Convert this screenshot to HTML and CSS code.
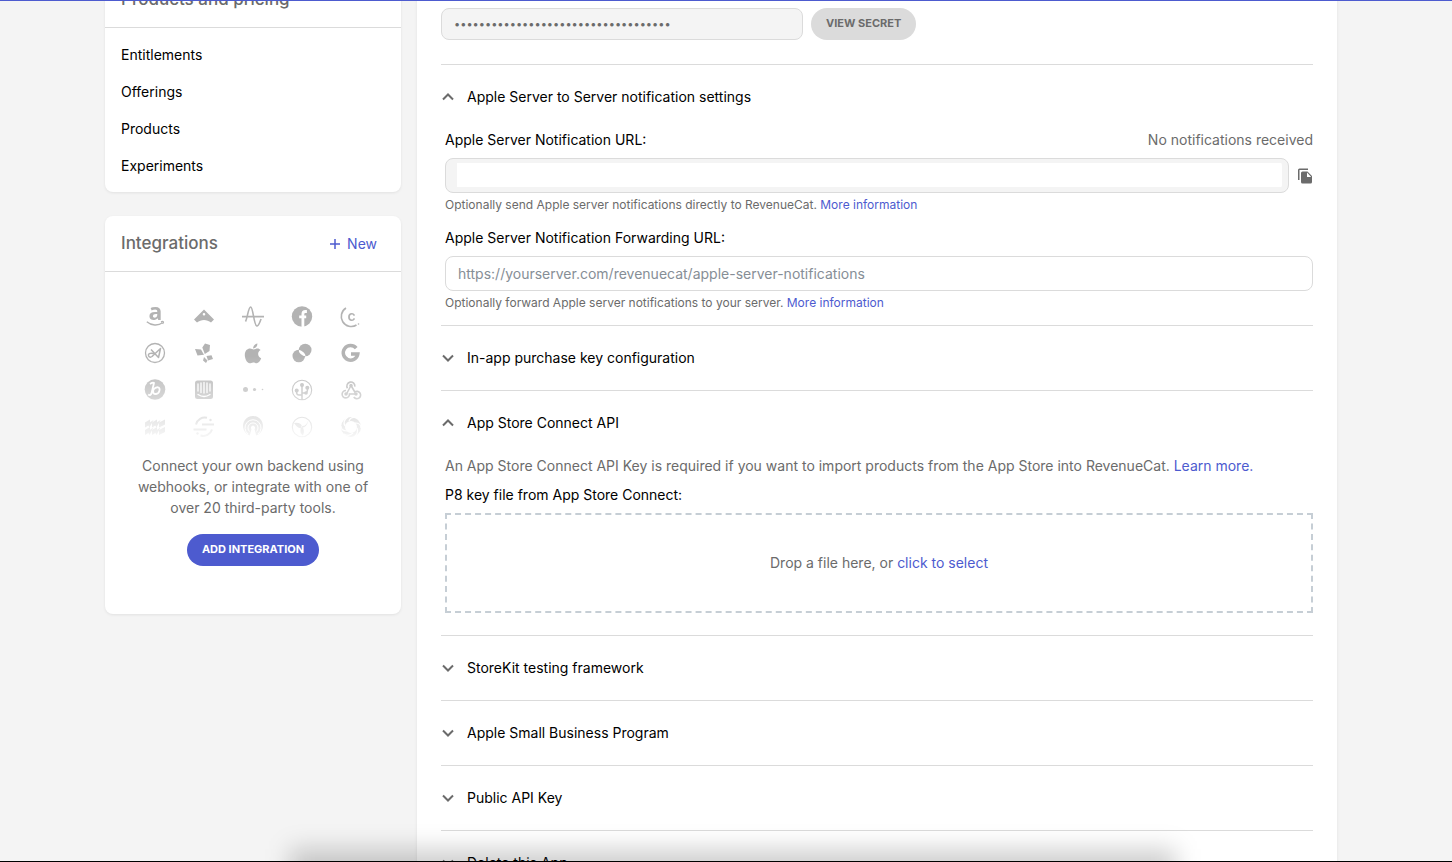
FILE: index.html
```html
<!DOCTYPE html>
<html lang="en">
<head>
<meta charset="utf-8">
<title>App settings</title>
<link rel="stylesheet" href="styles.css">
</head>
<body>
<div class="page">
  <aside class="sidebar">
    <nav class="card">
      <div class="card-header"><h2 class="card-title">Products and pricing</h2></div>
      <ul class="nav-list">
        <li><a class="nav-link" href="#">Entitlements</a></li>
        <li><a class="nav-link" href="#">Offerings</a></li>
        <li><a class="nav-link" href="#">Products</a></li>
        <li><a class="nav-link" href="#">Experiments</a></li>
      </ul>
    </nav>

    <section class="card">
      <div class="card-header">
        <h2 class="card-title">Integrations</h2>
        <button class="new-button" type="button">
          <svg width="10" height="10" viewBox="0 0 10 10"><path d="M5 0v10M0 5h10" stroke="currentColor" stroke-width="1.5"/></svg>
          New
        </button>
      </div>
      <div class="integrations">
        <div class="logo-grid" aria-hidden="true">
          <svg class="logo" viewBox="0 0 24 24"><text class="logo-a" x="12.500" y="16" text-anchor="middle">a</text><path class="line" stroke-width="1.300" d="M3.800 17.800c4.500 4 11.500 4.200 15.700 1M18 17.900c1-.5 2-.5 2.300-.2s-.1 1.500-.7 2.200"/></svg>
          <svg class="logo" viewBox="0 0 24 24"><path fill-rule="evenodd" d="M12 5.500 22 15.500 19 18.500C15 15 9 15 5 18.500L2 15.500ZM12 9a1.300 1.300 0 1 0 0 2.600A1.300 1.300 0 0 0 12 9Z"/></svg>
          <svg class="logo" viewBox="0 0 24 24"><path class="line" stroke-width="1.600" d="M1 12.600h22M4.500 17.500C6.500 14 7.300 3 9.700 3s3.200 19 6.200 19c2 0 2.800-4 4.200-7"/></svg>
          <svg class="logo" viewBox="0 0 24 24"><circle cx="12" cy="12.500" r="10.200"/><path stroke="#fff" stroke-width="2.800" fill="none" d="M12.900 23v-13q0-2.500 2.500-2.500h1.500M9.200 12.900h7"/></svg>
          <svg class="logo" viewBox="0 0 24 24"><path class="line" stroke-width="1.600" d="M7 4A9.700 9.700 0 1 0 17.500 21"/><text class="logo-c" x="12.500" y="16.500" text-anchor="middle">c</text><circle cx="19.500" cy="20" r=".8"/></svg>

          <svg class="logo" viewBox="0 0 24 24"><circle class="line" cx="12" cy="12" r="9.500" stroke-width="1.300"/><path class="line" stroke-width="1.500" stroke-linejoin="round" d="M8 8.500 15.500 16.500 17.500 7.500 9 15.500C7 17 5 15.500 5.500 13.500 6 12 8 12 12 12.800"/></svg>
          <svg class="logo" viewBox="0 0 24 24"><path d="M13 2.500 18 4l-.5 6-4.700 3-2.500-6.500ZM3 8l6 .5 3 5.300-6.500.7ZM14.500 15l5-.7L21 18l-5 1.500ZM12 16l3.500 3.500L14 22l-3-2.500Z"/></svg>
          <svg class="logo" viewBox="0 0 24 24"><path d="M16.400 2.500c.1 3-2 5-4.300 4.900C12 5 14 2.800 16.400 2.500ZM19.600 9c-3.700 2.200-3 6.800.6 8.200-1 2.700-2.600 5-4.600 5-1.300 0-1.800-.8-3.400-.8s-2.200.8-3.500.8C5.700 22.200 3.800 17 3.800 14c0-4.500 2.700-6.600 5.200-6.600 1.500 0 2.700 1 3.600 1s2.300-1 4-1c1 0 2.300.5 3 1.600Z"/></svg>
          <svg class="logo" viewBox="0 0 24 24"><circle cx="15.200" cy="9" r="6.300"/><circle cx="8.800" cy="15" r="6.300"/><path fill="#fff" d="M9 9c2-.4 7.200 4 6.300 6-2 .6-7.500-3.500-6.300-6Z"/></svg>
          <svg class="logo" viewBox="0 0 24 24"><path class="line" stroke-width="3.500" d="M17.200 7.200A7.300 7.300 0 1 0 18.800 12.900H12"/></svg>

          <svg class="logo" viewBox="0 0 24 24"><circle cx="12" cy="11.500" r="10.300"/><path fill="none" stroke="#fff" stroke-width="1.800" d="M7 6q3-2 4-1L8.700 14.500q-1 3.800-3.500 2M10.500 11.500q2-2.500 4.500-2.200c3 .5 1.500 6.500-2 6.700-2.500.2-3.500-1.500-2.500-4.500"/></svg>
          <svg class="logo" viewBox="0 0 24 24"><rect x="3" y="2.500" width="18" height="18.500" rx="2.500"/><path fill="none" stroke="#fff" stroke-width="1.300" stroke-linecap="round" d="M6 6v7M9 5v9.500M12 4.500v10.500M15 5v9.500M18 6v7M6 16.500q6 4 12 0"/></svg>
          <svg class="logo" viewBox="0 0 24 24"><circle cx="4.500" cy="11.500" r="2.500"/><circle cx="13.500" cy="11.500" r="1.600"/><circle cx="21.500" cy="11.500" r=".8"/></svg>
          <svg class="logo" viewBox="0 0 24 24"><circle class="line" cx="12" cy="12" r="9.700" stroke-width="1.100"/><path class="line" stroke-width="1.500" d="M12 22V7M12 17H9q-2.500 0-2.500-3.500M12 15h3q2.500 0 2.500-4"/><circle cx="12" cy="7" r="2"/><circle cx="6.700" cy="12.500" r="2"/><circle cx="17.300" cy="9.700" r="2"/><circle cx="16" cy="15" r="1.800"/></svg>
          <svg class="logo" viewBox="0 0 24 24"><path class="line" stroke-width="1.600" d="M8.500 10.200a4 4 0 1 1 7.300-1.500M12 7.500 15.800 14a3.700 3.700 0 1 1-1 5M12 7.500 7.500 16M7 12.500A3.700 3.700 0 1 0 10.500 16h6.500"/><circle cx="12" cy="7.500" r="1.700"/><circle cx="7" cy="16" r="1.700"/><circle cx="17" cy="16" r="1.700"/></svg>

          <svg class="logo" viewBox="0 0 24 24"><path d="m2 7.500 5-3v5l-5 3Zm7 0 5-3v5l-5 3Zm7 0 6-3v5l-6 3ZM2 15l5-3v5l-5 3Zm7 0 5-3v5l-5 3Zm7 0 6-3v5l-6 3Z"/><path d="m4.500 9 6-4-4 7.500Zm7 0 6-4-4 7.500Zm-7 7.500 6-4-4 7.500Zm7 0 6-4-4 7.500Z"/></svg>
          <svg class="logo" viewBox="0 0 24 24"><path class="line" stroke-width="2" d="M10 9.500h12M1.500 14.500h13M4 9.500A9 9 0 0 1 15 2.800M20 14.500A9 9 0 0 1 8.500 20.500"/><circle cx="18.500" cy="5" r="1.200"/><circle cx="5.500" cy="18.500" r="1.200"/></svg>
          <svg class="logo" viewBox="0 0 24 24"><path d="M8.800 20.500a10 10 0 1 1 6.400 0L13.500 14a2 2 0 1 0-3 0Z"/><path fill="none" stroke="#fff" d="M8.500 16.500a5 5 0 1 1 7 0M7 19a8 8 0 1 1 10 0"/></svg>
          <svg class="logo" viewBox="0 0 24 24"><circle class="line" cx="12" cy="12" r="9.700" stroke-width="1.100"/><path d="M4 8q6-1 8 3 1 2-.5 2.300Q8 14 4 8ZM18.500 5q-2 6-6 6-2 0-1.500 1.700Q17 13 18.500 5ZM13 20.500q-4-3-2-7.500.8-1.500 1.700-.5 2.300 3 .3 8Z"/></svg>
          <svg class="logo" viewBox="0 0 24 24"><circle class="line" cx="12" cy="12" r="8" stroke-width="4"/><path fill="none" stroke="#fff" stroke-width="1.200" d="M10 6Q12 1 18 3M16 8q6 0 6 5M18 13q2 5-3 9M14 18q-4 4-9 1M8 16q-6 0-6-5M6 11Q3 6 9 2"/></svg>
        </div>
        <p class="integrations-text">Connect your own backend using webhooks, or integrate with one of over 20 third-party tools.</p>
        <button class="pill pill-primary" type="button">ADD INTEGRATION</button>
      </div>
    </section>
  </aside>

  <main class="main">
    <div class="secret-row">
      <input class="input secret-input" type="password" aria-label="Shared secret" value="abcdefghijklmnopqrstuvwxyz123456789" readonly>
      <button class="pill pill-muted" type="button">VIEW SECRET</button>
    </div>

    <section class="panel">
      <button class="panel-header" type="button" aria-expanded="true">
        <svg class="chevron chevron-up" viewBox="0 0 14 14"><path d="m2 4.500 5 5 5-5"/></svg>
        <span>Apple Server to Server notification settings</span>
      </button>
      <div class="panel-body">
        <div class="label-row">
          <label for="server-url">Apple Server Notification URL:</label>
          <span class="muted">No notifications received</span>
        </div>
        <div class="url-row">
          <input class="input url-input" id="server-url" type="text" readonly>
          <button class="copy-button" type="button" aria-label="Copy URL">
            <svg width="16" height="16" viewBox="0 0 16 16"><path d="M1 12V2q0-1.500 1.500-1.500H11V2H2.500v10Z"/><path fill-rule="evenodd" d="M5.500 3.500h5L15 8v6q0 1.500-1.500 1.500h-8Q4 15.500 4 14V5q0-1.500 1.500-1.500ZM10 4.500V9h4.200Z"/></svg>
          </button>
        </div>
        <p class="help">Optionally send Apple server notifications directly to RevenueCat. <a href="#">More information</a></p>
        <div class="label-row label-row-next"><label for="forward-url">Apple Server Notification Forwarding URL:</label></div>
        <input class="input forward-input" id="forward-url" type="url" placeholder="https://yourserver.com/revenuecat/apple-server-notifications">
        <p class="help">Optionally forward Apple server notifications to your server. <a href="#">More information</a></p>
      </div>
    </section>

    <section class="panel">
      <button class="panel-header" type="button" aria-expanded="false">
        <svg class="chevron" viewBox="0 0 14 14"><path d="m2 4.500 5 5 5-5"/></svg>
        <span>In-app purchase key configuration</span>
      </button>
    </section>

    <section class="panel">
      <button class="panel-header" type="button" aria-expanded="true">
        <svg class="chevron chevron-up" viewBox="0 0 14 14"><path d="m2 4.500 5 5 5-5"/></svg>
        <span>App Store Connect API</span>
      </button>
      <div class="panel-body panel-body-upload">
        <p class="muted intro">An App Store Connect API Key is required if you want to import products from the App Store into RevenueCat. <a href="#">Learn more.</a></p>
        <div class="label-row"><span id="p8-label">P8 key file from App Store Connect:</span></div>
        <div class="dropzone muted" role="group" aria-labelledby="p8-label"><span>Drop a file here, or <a href="#">click to select</a></span></div>
      </div>
    </section>

    <section class="panel">
      <button class="panel-header" type="button" aria-expanded="false">
        <svg class="chevron" viewBox="0 0 14 14"><path d="m2 4.500 5 5 5-5"/></svg>
        <span>StoreKit testing framework</span>
      </button>
    </section>
    <section class="panel">
      <button class="panel-header" type="button" aria-expanded="false">
        <svg class="chevron" viewBox="0 0 14 14"><path d="m2 4.500 5 5 5-5"/></svg>
        <span>Apple Small Business Program</span>
      </button>
    </section>
    <section class="panel">
      <button class="panel-header" type="button" aria-expanded="false">
        <svg class="chevron" viewBox="0 0 14 14"><path d="m2 4.500 5 5 5-5"/></svg>
        <span>Public API Key</span>
      </button>
    </section>
    <section class="panel">
      <button class="panel-header" type="button" aria-expanded="false">
        <svg class="chevron" viewBox="0 0 14 14"><path d="m2 4.500 5 5 5-5"/></svg>
        <span>Delete this App</span>
      </button>
    </section>
  </main>
</div>
<div class="window-frame"><div class="window-shadow"></div></div>
</body>
</html>
```

FILE: styles.css
```css
* { box-sizing: border-box; }

body {
  margin: 0;
  height: 100vh;
  overflow: hidden;
  background: #f4f4f4;
  color: #000;
  font: 14px/21px Inter, "Liberation Sans", sans-serif;
}

h2, p, ul { margin: 0; padding: 0; }
a { color: #4d5bcf; text-decoration: none; }
button { font: inherit; color: inherit; border: 0; background: none; padding: 0; cursor: pointer; }
svg { display: block; flex: none; overflow: visible; }

.page {
  display: flex;
  align-items: flex-start;
  gap: 16px;
  max-width: 1242px;
  margin: -28px auto 0;
  padding-right: 10px;
}

.sidebar {
  flex: 0 0 296px;
  display: flex;
  flex-direction: column;
  gap: 24px;
}

.card {
  background: #fff;
  border-radius: 8px;
  box-shadow: 0 1px 3px rgba(0, 0, 0, .08);
}

.card-header {
  display: flex;
  align-items: center;
  justify-content: space-between;
  height: 56px;
  padding: 0 24px 0 16px;
  border-bottom: 1px solid #dbdbdb;
}

.card-title { padding-bottom: 1px; font-size: 17px; font-weight: 500; color: #6b6b6b; }

.new-button {
  display: flex;
  align-items: center;
  gap: 7px;
  color: #4d5bcf;
}

.nav-list { list-style: none; padding: 8px 0; }
.nav-link { display: block; padding: 8px 16px; color: #000; }

.integrations {
  display: flex;
  flex-direction: column;
  align-items: center;
  padding: 25px 26px 48px;
  text-align: center;
}

.logo-grid {
  align-self: stretch;
  display: grid;
  grid-template-columns: repeat(5, 1fr);
  grid-auto-rows: 37px;
  place-items: center;
  mask-image: linear-gradient(#000 40%, transparent 102%);
}

.logo { width: 24px; height: 24px; fill: #b3b3b3; }
.logo .line { fill: none; stroke: #b3b3b3; }
.logo-a { font: 700 23px "Open Sans", sans-serif; }
.logo-c { font: 600 14px Inter, sans-serif; }

.integrations-text { margin: 10px 0 16px; color: #6b6b6b; }

.pill {
  height: 32px;
  padding: 0 15px 1px;
  border-radius: 16px;
  font-size: 11px;
  font-weight: 700;
  white-space: nowrap;
}
.pill-primary { background: #4d5bcf; color: #fff; }
.pill-muted { background: #dbdbdb; color: #6b6b6b; }

.main {
  flex: 1;
  min-width: 0;
  padding: 36px 24px 0;
  background: #fff;
  box-shadow: 0 1px 3px rgba(0, 0, 0, .08);
}

.secret-row { display: flex; gap: 8px; padding-bottom: 24px; }

.input {
  height: 35px;
  border: 1px solid #dbdbdb;
  border-radius: 8px;
  padding: 0 12px;
  background: #fff;
  color: #6b6b6b;
  font: inherit;
  outline: 0;
}
.input::placeholder { color: #868e96; opacity: 1; }
.secret-input { width: 362px; height: 32px; background: #f4f4f4; font-size: 11px; }
.forward-input { display: block; width: 100%; }
.url-input {
  flex: 1;
  min-width: 0;
  padding: 4px 6px 5px 11px;
  background: linear-gradient(#fff, #fff) content-box, #f4f4f4;
}

.panel { border-top: 1px solid #dbdbdb; }
.panel-header {
  display: flex;
  align-items: center;
  gap: 12px;
  width: 100%;
  height: 64px;
  text-align: left;
}
.panel-header span { padding-bottom: 2px; }
.chevron { width: 14px; height: 14px; fill: none; stroke: #6b6b6b; stroke-width: 2; }
.chevron-up { transform: rotate(180deg); }

.panel-body { padding: 0 0 13px 4px; }
.panel-body-upload { padding-bottom: 22px; }
.label-row { display: flex; justify-content: space-between; margin-bottom: 8px; }
.label-row-next { margin-top: 13px; }
.muted { color: #6b6b6b; }
.url-row { display: flex; align-items: center; gap: 8px; }
.copy-button { padding-top: 1px; }
.copy-button svg { fill: #6b6b6b; }
.help { margin-top: 3px; font-size: 12px; line-height: 18px; color: #6b6b6b; }
.intro { margin-bottom: 8px; }

.dropzone {
  display: flex;
  align-items: center;
  justify-content: center;
  height: 100px;
  padding-bottom: 2px;
  border: 2px dashed #c6ced5;
}

.window-frame {
  position: fixed;
  inset: 0;
  overflow: hidden;
  border-top: 1px solid #4d5bcf;
  border-bottom: 1px solid #000;
  pointer-events: none;
}
.window-shadow {
  position: absolute;
  top: calc(100% - 12px);
  left: 20%;
  right: 19%;
  height: 100px;
  background: rgba(0, 0, 0, .19);
  filter: blur(12px);
}
```
